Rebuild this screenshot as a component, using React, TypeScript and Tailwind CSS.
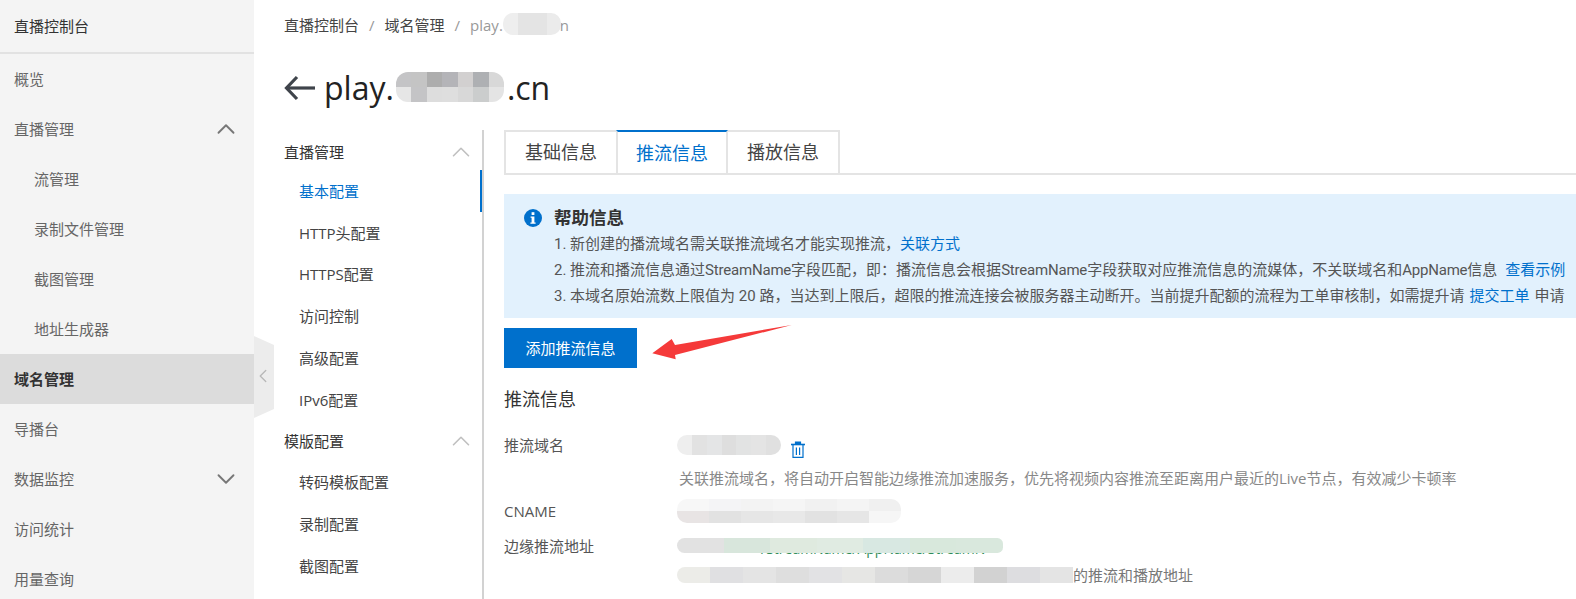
import React from 'react';
import { ChevronUp, ChevronDown, ChevronLeft } from 'lucide-react';

const fontStack = 'font-["Open_Sans","Noto_Sans_CJK_SC",sans-serif]';

interface MosaicProps {
  cells: string[];
  className?: string;
}

// pixelated block standing in for the redacted text
function Mosaic({ cells, className = '' }: MosaicProps) {
  return (
    <span className={`flex overflow-hidden ${className}`}>
      {cells.map((c, i) => (
        <span key={i} className={`flex-1 ${c}`} />
      ))}
    </span>
  );
}

function SideItem({ label, indent, active, icon }: { label: string; indent?: boolean; active?: boolean; icon?: React.ReactNode }) {
  return (
    <div className={`h-[50px] flex items-center justify-between pr-[13px] text-[15px] ${indent ? 'pl-[34px]' : 'pl-[14px]'} ${active ? 'bg-[#dcdcdc] text-[#333333] font-bold' : 'text-[#666666]'}`}>
      <span>{label}</span>
      {icon}
    </div>
  );
}

function SubNavGroup({ title, items, active, first }: { title: string; items: string[]; active?: string; first?: boolean }) {
  return (
    <div>
      <div className={`h-[40px] flex items-center justify-between pl-[30px] pr-[6px] text-[15px] text-[#333333] ${first ? 'pt-[4px]' : ''}`}>
        <span>{title}</span>
        <ChevronUp size={30} strokeWidth={1.3} className="text-[#c0c0c0]" />
      </div>
      {items.map(item => (
        <div key={item} className={`h-[41.9px] flex items-center pl-[45px] text-[15px] ${item === active ? 'text-[#0070cc] border-r-2 border-[#0070cc]' : 'text-[#444444]'}`}>
          {item}
        </div>
      ))}
    </div>
  );
}

function Row({ label, children, className = '' }: { label: string; children: React.ReactNode; className?: string }) {
  return (
    <div className={`flex items-center text-[15px] ${className}`}>
      <span className="w-[173px] shrink-0 text-[#555555]">{label}</span>
      {children}
    </div>
  );
}

function Latin({ children }: { children: React.ReactNode }) {
  return <span className="tracking-[-0.2px]">{children}</span>;
}

export default function App() {
  return (
    <div className={`relative flex w-[1576px] h-[599px] overflow-hidden bg-white ${fontStack}`}>
      {/* Left sidebar */}
      <aside className="w-[254px] shrink-0 bg-[#f4f4f4]">
        <div className="h-[54px] flex items-center pl-[14px] text-[15px] text-[#333333] border-b-2 border-[#e2e2e2]">直播控制台</div>
        <SideItem label="概览" />
        <SideItem label="直播管理" icon={<ChevronUp size={30} strokeWidth={1.5} className="text-[#777777]" />} />
        <SideItem label="流管理" indent />
        <SideItem label="录制文件管理" indent />
        <SideItem label="截图管理" indent />
        <SideItem label="地址生成器" indent />
        <SideItem label="域名管理" active />
        <SideItem label="导播台" />
        <SideItem label="数据监控" icon={<ChevronDown size={30} strokeWidth={1.5} className="text-[#777777]" />} />
        <SideItem label="访问统计" />
        <SideItem label="用量查询" />
      </aside>

      {/* Collapse handle */}
      <div className="absolute left-[254px] top-[336px] w-[20px] h-[82px] bg-[#ececec] [clip-path:polygon(0_0,100%_11%,100%_89%,0_100%)] flex items-center justify-center">
        <ChevronLeft size={28} strokeWidth={1.5} className="text-[#b9b9b9] -ml-[2px] -mt-[2px]" />
      </div>

      <main className="flex-1 min-w-0 flex flex-col">
        {/* Breadcrumb */}
        <div className="h-[50px] flex items-center pl-[30px] text-[15px] text-[#444444]">
          <span>直播控制台</span>
          <span className="mx-[10px] text-[#999999]">/</span>
          <span>域名管理</span>
          <span className="mx-[10px] text-[#999999]">/</span>
          <span className="relative text-[#999999]">
            play.
            <span className="ml-[57px]">n</span>
            <Mosaic className="absolute left-[33px] top-[-1px] w-[58px] h-[22px] rounded-[10px]" cells={['bg-[#eeeeee]', 'bg-[#e4e4e4]', 'bg-[#e4e4e4]', 'bg-[#ebebeb]']} />
          </span>
        </div>

        {/* Title */}
        <div className="h-[76px] flex items-center pl-[30px]">
          <svg width="31" height="26" viewBox="0 0 31 26" fill="none" stroke="#3f444b" strokeWidth="3.2" className="mr-[9px]">
            <path d="M13 2 2.5 13 13 24" />
            <path d="M3 13h28" />
          </svg>
          <span className="relative text-[32px] leading-none text-[#222222]">
            play.<span className="ml-[113px]">.cn</span>
            <span className="absolute left-[72px] top-[0px] w-[108px] h-[30px] rounded-[12px] overflow-hidden flex flex-col">
              <Mosaic className="flex-1" cells={['bg-[#c4c4c6]', 'bg-[#c4c4c4]', 'bg-[#adadad]', 'bg-[#b4b4b8]', 'bg-[#d2d0d0]', 'bg-[#aeb0b3]', 'bg-[#d8d8d8]']} />
              <Mosaic className="flex-1" cells={['bg-[#e6e6e6]', 'bg-[#c4c4c6]', 'bg-[#dddddd]', 'bg-[#dedede]', 'bg-[#d8d8d8]', 'bg-[#cbcdcd]', 'bg-[#e4e4e4]']} />
            </span>
          </span>
        </div>

        <div className="flex flex-1 min-h-0 mt-[4px]">
          {/* Config nav */}
          <nav className="w-[230px] shrink-0 border-r-2 border-[#d2d2d2]">
            <SubNavGroup first title="直播管理" active="基本配置" items={['基本配置', 'HTTP头配置', 'HTTPS配置', '访问控制', '高级配置', 'IPv6配置']} />
            <SubNavGroup title="模版配置" items={['转码模板配置', '录制配置', '截图配置']} />
          </nav>

          {/* Content */}
          <section className="flex-1 min-w-0 pl-[20px]">
            <div className="flex h-[45px] border-b-2 border-[#e4e4e4] text-[18px]">
              <div className="w-[112px] h-[45px] flex items-center justify-center border-2 border-r-0 border-[#e4e4e4] text-[#444444]">基础信息</div>
              <div className="w-[112px] h-[45px] flex items-center justify-center border-x-2 border-t-2 border-x-[#e4e4e4] border-t-[#0070cc] text-[#0070cc]">推流信息</div>
              <div className="w-[112px] h-[45px] flex items-center justify-center border-2 border-l-0 border-[#e4e4e4] text-[#444444]">播放信息</div>
            </div>

            <div className='mt-[19px] h-[124px] bg-[#e2f1fd] pt-[14px] pl-[20px] whitespace-nowrap font-["Roboto","Noto_Sans_CJK_SC",sans-serif]'>
              <div className="flex items-center h-[20px] text-[17.5px] font-bold text-[#333333]">
                <svg width="18" height="18" viewBox="0 0 18 18" className="mr-[12px]">
                  <circle cx="9" cy="9" r="9" fill="#0070cc" />
                  <rect x="7.6" y="3.2" width="2.8" height="2.8" fill="#ffffff" />
                  <path d="M6.6 7.4h3.8v6h1.2v1.4H6.4v-1.4h1.2V8.8h-1z" fill="#ffffff" />
                </svg>
                帮助信息
              </div>
              <div className="pl-[30px] text-[15px] text-[#555555]">
                <div className="h-[26px] mt-[3px] flex items-center">1. 新创建的播流域名需关联推流域名才能实现推流，<span className="text-[#0070cc]">关联方式</span></div>
                <div className="h-[26px] flex items-center">2. 推流和播流信息通过<Latin>StreamName</Latin>字段匹配，即：播流信息会根据<Latin>StreamName</Latin>字段获取对应推流信息的流媒体，不关联域名和<Latin>AppName</Latin>信息<span className="ml-[8px] text-[#0070cc]">查看示例</span></div>
                <div className="h-[27px] flex items-center">3. 本域名原始流数上限值为 20 路，当达到上限后，超限的推流连接会被服务器主动断开。当前提升配额的流程为工单审核制，如需提升请<span className="mx-[5px] text-[#0070cc]">提交工单</span>申请</div>
              </div>
            </div>

            <button className="mt-[10px] w-[133px] h-[40px] bg-[#0070cc] text-white text-[15px]">添加推流信息</button>

            <div className="mt-[19px] h-[24px] flex items-center text-[18px] text-[#333333]">推流信息</div>

            <Row label="推流域名" className="mt-[22px] h-[24px]">
              <Mosaic className="w-[104px] h-[20px] rounded-[10px]" cells={['bg-[#eeeeee]', 'bg-[#e2e2e2]', 'bg-[#e4e5e6]', 'bg-[#dedede]', 'bg-[#e2e3e3]', 'bg-[#e4e4e4]', 'bg-[#e0e0e0]']} />
              <svg width="14" height="17" viewBox="0 0 14 17" fill="none" stroke="#0070cc" strokeWidth="1.2" className="ml-[10px] mt-[9px]">
                <path d="M0 3.5h14" strokeWidth="1.6" />
                <path d="M4.5 3V1h5v2" fill="#0070cc" />
                <path d="M2 4v12.4h10V4" />
                <path d="M5.4 6.5v7.5M8.6 6.5v7.5" />
              </svg>
            </Row>
            <div className="pl-[175px] mt-[10px] text-[15px] text-[#888888] h-[22px] flex items-center whitespace-nowrap">关联推流域名，将自动开启智能边缘推流加速服务，优先将视频内容推流至距离用户最近的Live节点，有效减少卡顿率</div>

            <Row label="CNAME" className="mt-[9px] h-[26px]">
              <span className="w-[224px] h-[24px] rounded-[10px] overflow-hidden flex flex-col">
                <Mosaic className="flex-1" cells={['bg-[#f7f7f7]', 'bg-[#f4f4f6]', 'bg-[#f3f3f3]', 'bg-[#f5f5f5]', 'bg-[#f1f1f1]', 'bg-[#f4f4f4]', 'bg-[#f0f0f0]']} />
                <Mosaic className="flex-1" cells={['bg-[#e8e4e4]', 'bg-[#e2e2e2]', 'bg-[#e6e6e6]', 'bg-[#e8e8e8]', 'bg-[#e2e2e2]', 'bg-[#e6e6e6]', 'bg-[#f6f6f6]']} />
              </span>
            </Row>

            <Row label="边缘推流地址" className="mt-[9px] h-[26px]">
              <span className="relative w-[326px] h-[26px]">
                <span className="absolute left-[84px] top-[5px] text-[14px] text-[#2e8b57]">/StreamName/AppName/StreamN</span>
                <Mosaic className="absolute left-0 top-[5px] w-full h-[15px] rounded-l-[8px] rounded-r-[6px]" cells={['bg-[#e2e2e2]', 'bg-[#d8e6dc]', 'bg-[#dfeadf]', 'bg-[#e0ebe2]', 'bg-[#d8e8e2]', 'bg-[#d8e8dc]', 'bg-[#d9e8dd]']} />
              </span>
            </Row>

            <div className="pl-[173px] mt-[4px] h-[24px] flex items-center text-[15px] text-[#777777] whitespace-nowrap">
              <Mosaic className="w-[396px] h-[16px] rounded-l-[8px]" cells={['bg-[#ecece8]', 'bg-[#e0e0e2]', 'bg-[#e4e4e4]', 'bg-[#dedede]', 'bg-[#e2e2e4]', 'bg-[#e6e6e4]', 'bg-[#dcdcdc]', 'bg-[#d6d6d6]', 'bg-[#ececec]', 'bg-[#d2d2d2]', 'bg-[#dddde0]', 'bg-[#e4e4e4]']} />
              <span>的推流和播放地址</span>
            </div>
          </section>
        </div>
      </main>

      {/* Red annotation arrow */}
      <svg width="150" height="42" viewBox="0 0 150 42" className="absolute left-[650px] top-[322px]">
        <path d="M2.3 31.3 21.7 17 25 23 141.7 3 25 33 25.7 37.3z" fill="#f53a3a" />
      </svg>
    </div>
  );
}
